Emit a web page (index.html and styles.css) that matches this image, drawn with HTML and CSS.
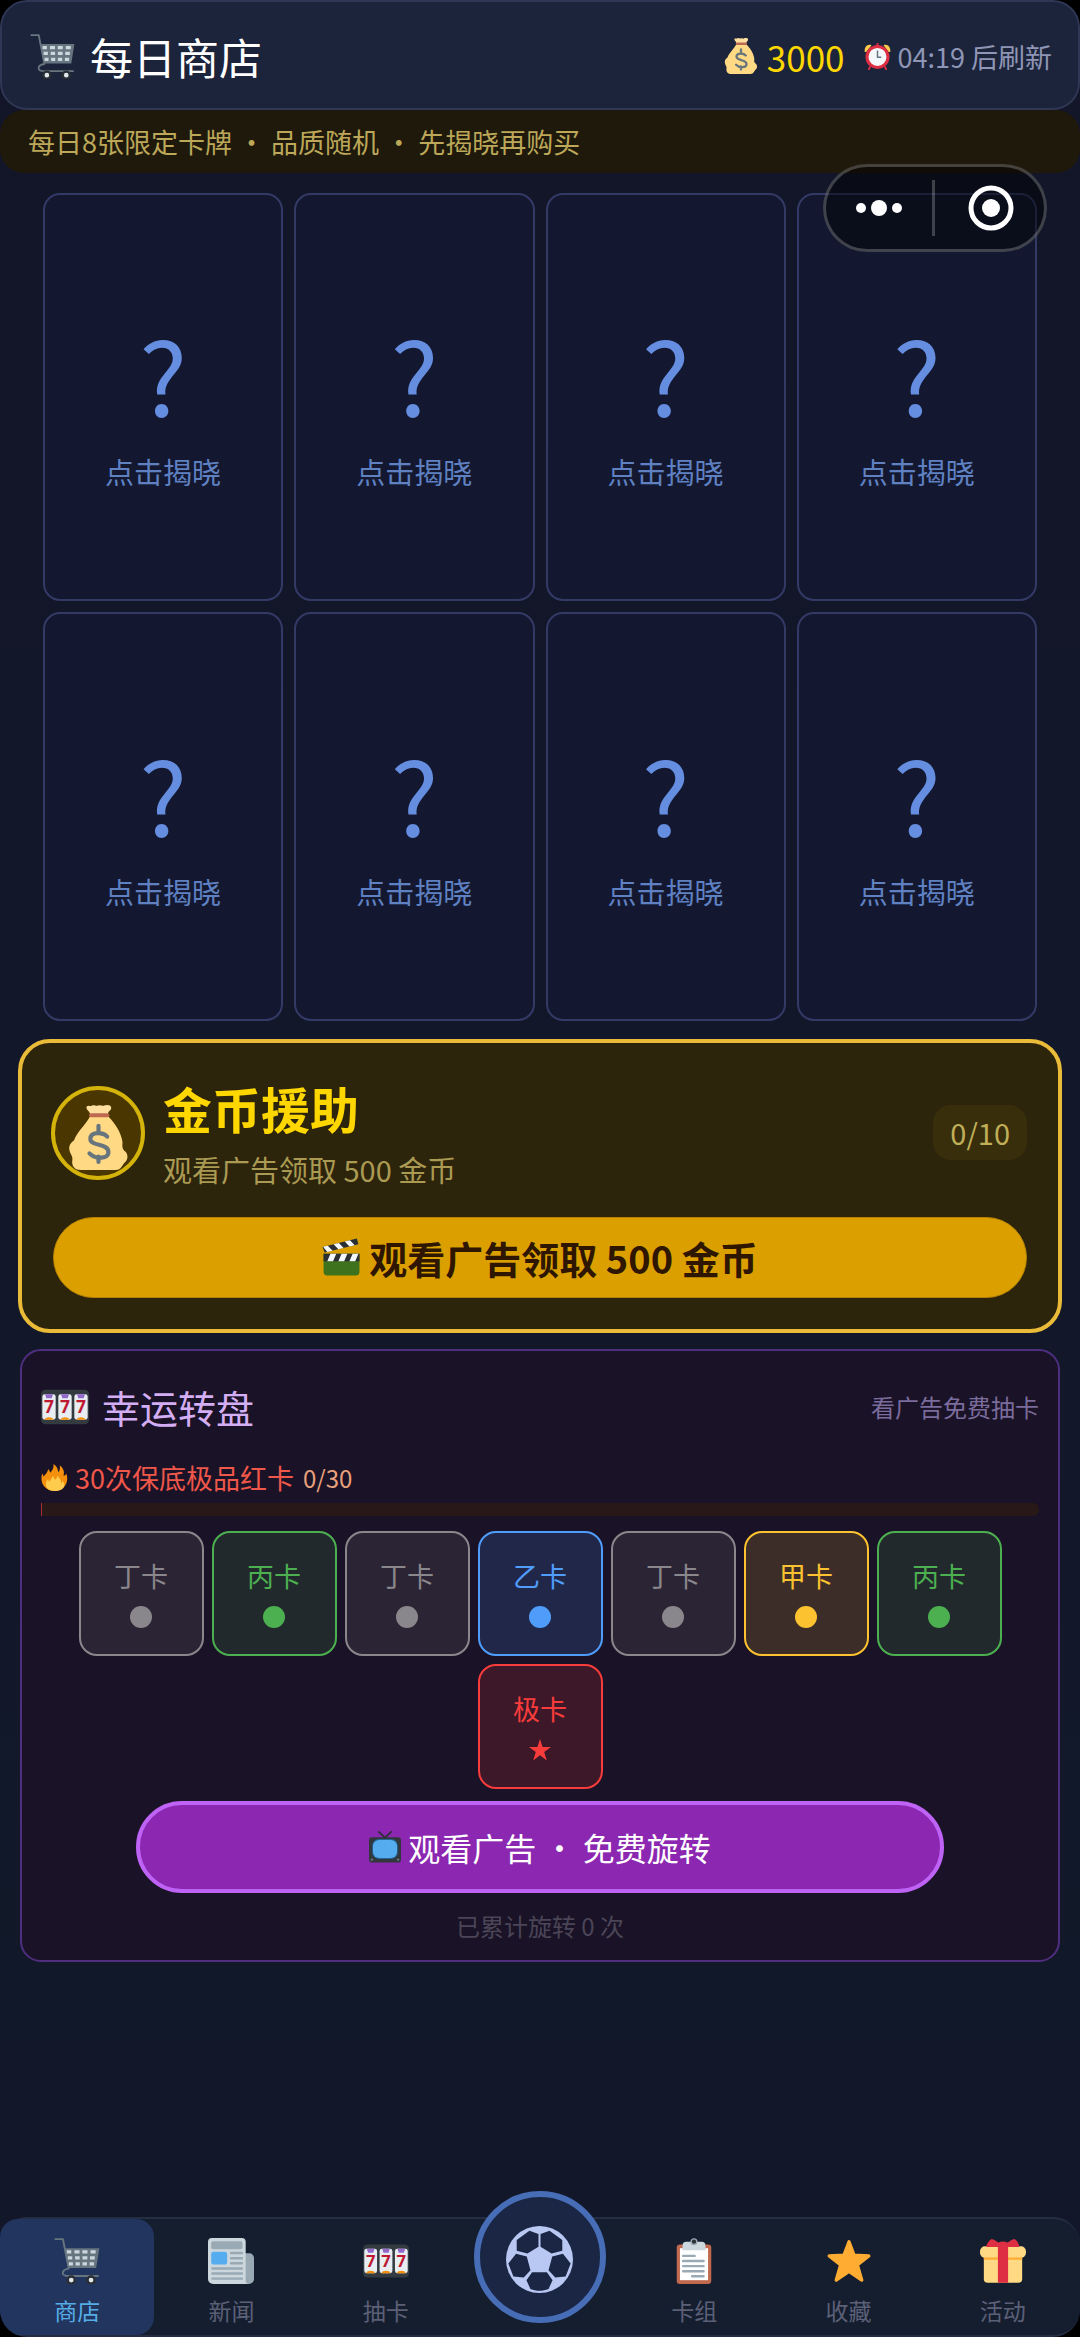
FILE: index.html
```html
<!DOCTYPE html>
<html lang="zh-CN">
<head>
  <meta charset="UTF-8">
  <meta name="viewport" content="width=device-width, initial-scale=1.0">
  <title>每日商店</title>
  <link rel="stylesheet" href="styles.css">
</head>
<body>

<!-- 图标 -->
<svg class="sprite" aria-hidden="true">
  <symbol id="i-cart" viewBox="0 0 36 36">
    <path d="M.5 .9H7L11.5 24C8 24.500 6.500 26 7 28C7.500 29.500 9 29.700 11 29.700H35" fill="none" stroke="#66757f" stroke-width="1.500" stroke-linejoin="round"/>
    <path d="M8.500 8H35.500L33 23.500H11.500Z" fill="#66757f"/>
    <path d="M10 10.900h3.500M16 10.900h4M22.200 10.900h4M28.600 10.900h4M10.800 15.500h3.500M16.500 15.500h3.600M22.300 15.500h3.800M28.200 15.500h3.700M11.600 20.200h3.200M16.900 20.200h3.300M22.300 20.200h3.500M27.900 20.200h3.400" stroke="#ccd6dd" stroke-width="2.600"/>
    <g fill="#e1e8ed" stroke="#292f33" stroke-width="1.900"><circle cx="13.500" cy="32.900" r="2.800"/><circle cx="29" cy="32.900" r="2.800"/></g>
  </symbol>
  <symbol id="i-bag" viewBox="0 0 36 36">
    <path d="M11.400 .8C12.500-.2 13.500 1 14.500 .3C15.700-.4 16.500 .9 17.800 .3C19 -.3 20 .9 21.200 .3C22.400-.2 25.500-.2 25 2C24.800 3.200 23.300 3.500 23.300 5H13.300C13 3 11 3 11.400 .8Z" fill="#ffdf9f"/>
    <path d="M13.200 6.500H23.600C27 10 30.500 15 31.300 20.500C31.200 22.500 31 24 32 25C34.500 26.500 34.800 30 32.500 31.800C31.200 33 30.700 36 27.500 36H8C4.500 36 3 33.500 3.500 30.500C3.900 28.500 2.500 27.500 2.100 25.800C1.300 23 2 21.300 4.500 19.500C6 15 10.500 11.500 13.200 6.500Z" fill="#ffd983"/>
    <rect x="12.800" y="4.500" width="11.200" height="2.300" rx="1" fill="#bf6952"/>
    <path d="M22.800 17.500C20.500 15 13.500 14.500 13.500 18.800C13.500 23 23.500 21 23.500 26C23.500 30.200 16 30 13 26.800M18 11.500V15.500M18 28.500V31.500" fill="none" stroke="#67757f" stroke-width="2.300" stroke-linecap="round"/>
  </symbol>
  <symbol id="i-clock" viewBox="0 0 36 36">
    <path d="M1 12C0 5 5 1 10 3L3 12ZM35 12C36 5 31 1 26 3L33 12Z" fill="#ffcc4d"/>
    <path d="M8 32L6.500 35M28 32L29.500 35M18 1V5" stroke="#dd2e44" stroke-width="2.500" stroke-linecap="round"/>
    <circle cx="18" cy="18.500" r="14" fill="#f5f8fa" stroke="#dd2e44" stroke-width="4"/>
    <path d="M18 10V19H23" fill="none" stroke="#66757f" stroke-width="2"/>
  </symbol>
  <symbol id="i-clap" viewBox="0 0 36 36">
    <path d="M1.500 15H35.500V32A3.500 3.500 0 0 1 32 35.500H5A3.500 3.500 0 0 1 1.500 32Z" fill="#3e721d"/>
    <path d="M1.500 15H35.500V22H1.500Z" fill="#292f33"/>
    <path d="M.5 8.500L33 .5L34.500 6L2.500 13.800Z" fill="#292f33"/>
    <path d="M5 22L8 15H13.500L10.500 22ZM15.500 22L18.500 15H24L21 22ZM26 22L29 15H34.500L31.500 22ZM1 8.400L5.500 7.300L10 12L5 13.200ZM11 6L16 4.700L20.500 9.500L15.500 10.700ZM21.500 3.400L26.500 2.200L31 6.900L26 8.100Z" fill="#f5f8fa"/>
  </symbol>
  <symbol id="i-slot" viewBox="0 0 36 36">
    <rect y="5" width="36" height="26" rx="3.500" fill="#343b40"/>
    <g fill="#e8edf1"><rect x="1" y="8.500" width="10" height="19" rx="1.800"/><rect x="13" y="8.500" width="10" height="19" rx="1.800"/><rect x="25" y="8.500" width="10" height="19" rx="1.800"/></g>
    <path d="M3 8.500H9L8 11.500H4ZM15 8.500H21L20 11.500H16ZM27 8.500H33L32 11.500H28Z" fill="#9268ca"/>
    <path d="M2.500 27.500C3 25 9 25 9.500 27.500ZM14.500 27.500C15 25 21 25 21.500 27.500ZM26.500 27.500C27 25 33 25 33.500 27.500Z" fill="#f4900c"/>
    <g class="seven"><text x="6" y="22.500">7</text><text x="18" y="22.500">7</text><text x="30" y="22.500">7</text></g>
  </symbol>
  <symbol id="i-fire" viewBox="0 0 36 36">
    <path d="M35 19C35 17 34.500 14.500 33.800 12.500C33 14.500 31.500 15.500 30 15.500C32 10 29 4.500 25 2C25.500 5 25.500 8.500 23 11C22.500 6 20.500 2 16.500 0C17.500 5 15 8.500 12.500 11.500C12 9.500 11 8 9.500 6.500C9.500 10.500 6 13 3.500 16.500C3 15 2.500 14 1.500 12.500C0 18 0 24 3.500 29C7 33.500 12 36 18 36C28 36 35 29 35 19Z" fill="#f4900c"/>
    <path d="M28.500 22C28.500 24 28 25 27 26C27 22 25 17.500 21.500 15.500C22 18 20 20 18.500 21C18 18.500 16.500 17 15 16C15.500 19 12.500 21 11 23.500C10 22.500 9.500 21.500 9.500 20C6 23.500 5.500 28 8 32C10.500 34.500 14 36 18 36C25 36 30 33.500 31 29C31.500 26.500 30.500 24 28.500 22Z" fill="#ffcc4d"/>
  </symbol>
  <symbol id="i-tv" viewBox="0 0 36 36">
    <path d="M11 1L18 7.500L25 1" fill="none" stroke="#292f33" stroke-width="1.800" stroke-linecap="round"/>
    <rect y="7" width="36" height="28.500" rx="3.500" fill="#31373d"/>
    <rect x="3.500" y="9" width="29" height="22.500" rx="8" fill="#226699"/>
    <rect x="4.500" y="10" width="27" height="20.500" rx="7" fill="#55acee"/>
    <circle cx="3.300" cy="32.200" r="1.400" fill="#66757f"/><circle cx="32.700" cy="32.200" r="1.400" fill="#66757f"/>
  </symbol>
  <symbol id="i-news" viewBox="0 0 36 36">
    <path d="M28 12H32.500A3.500 3.500 0 0 1 36 15.500V32A4 4 0 0 1 32 36H25Z" fill="#99aab5"/>
    <path d="M3 0H26.500A3 3 0 0 1 29.500 3V33Q29.500 36 32 36H4A4 4 0 0 1 0 32V3A3 3 0 0 1 3 0Z" fill="#ccd6dd"/>
    <rect x="2.500" y="2.500" width="24.500" height="6.300" rx="1.500" fill="#9aaab4"/>
    <rect x="2.500" y="10.800" width="12.500" height="10" rx="2" fill="#55acee"/>
    <path d="M18 11.800h8.500M18 15.800h8.500M18 19.800h8.500M3.500 23.800h23M3.500 27.800h23M3.500 31.800h23" stroke="#99aab5" stroke-width="1.900" stroke-linecap="round"/>
  </symbol>
  <symbol id="i-clip" viewBox="0 0 36 36">
    <rect x="4.500" y="5" width="27" height="31" rx="2.500" fill="#c1694f"/>
    <rect x="7" y="8" width="22" height="25" fill="#fff"/>
    <path d="M9 9.500V6A3 3 0 0 1 12 3H24A3 3 0 0 1 27 6V9.500Z" fill="#ccd6dd"/>
    <circle cx="18" cy="2.900" r="2.200" fill="#292f33" stroke="#99aab5" stroke-width="1.100"/>
    <path d="M9.500 14h9M9.500 18h16M9.500 22h16M9.500 26h16M16.500 30h9" stroke="#99aab5" stroke-width="1.900" stroke-linecap="round"/>
  </symbol>
  <symbol id="i-star" viewBox="0 0 36 36">
    <path d="M18 3L22 13.500L33.500 14L24.500 21L28 33L18 26.200L8 33L11.500 21L2.500 14L14 13.500Z" fill="#ffac33" stroke="#ffac33" stroke-width="2.600" stroke-linejoin="round"/>
  </symbol>
  <symbol id="i-gift" viewBox="0 0 36 36">
    <rect x="3" y="8" width="30" height="27" rx="3" fill="#ffd983"/>
    <rect y="6.500" width="36" height="9" rx="4" fill="#ffd983"/>
    <path d="M3 15.300H33V17H3Z" fill="#ffac33"/>
    <path d="M14 6.500H22V35H14Z" fill="#dd2e44"/>
    <path d="M18 7H5C5 5 7 2 9 .8C11 1 13 3 14.500 3.500C16.500 2.500 19.500 2.500 21.500 3.500C23 3 25 1 27 .8C29 2 31 5 30.500 7Z" fill="#dd2e44"/>
  </symbol>
  <symbol id="i-ball" viewBox="0 0 200 200">
    <circle cx="100" cy="100" r="100" fill="#b9c8f2"/>
    <path d="M70 14L97 24V62L64 82L32 74V42ZM130 14L103 24V62L136 82L168 74V42ZM30 83L62 91L73 132L53 154L22 151L7 112ZM170 83L138 91L127 132L147 154L178 151L193 112ZM78 138H122L139 162L127 188C110 195 90 195 73 188L61 162Z" fill="#1a2644"/>
  </symbol>
</svg>

<div class="app">
  <header class="header">
    <h1 class="title"><svg class="icon-lg"><use href="#i-cart"/></svg>每日商店</h1>
    <div class="coins"><svg class="icon-md"><use href="#i-bag"/></svg>3000</div>
    <div class="refresh"><svg class="icon-sm"><use href="#i-clock"/></svg>04:19 后刷新</div>
  </header>

  <p class="notice">每日8张限定卡牌 • 品质随机 • 先揭晓再购买</p>

  <div class="capsule">
    <button class="capsule-btn" aria-label="更多">
      <svg width="46" height="18" viewBox="0 0 46 18" fill="#fff"><circle cx="5" cy="9" r="5"/><circle cx="23" cy="9" r="8"/><circle cx="41" cy="9" r="5"/></svg>
    </button>
    <button class="capsule-btn" aria-label="关闭">
      <svg width="46" height="46" viewBox="0 0 46 46"><circle cx="23" cy="23" r="20" fill="none" stroke="#fff" stroke-width="5"/><circle cx="23" cy="23" r="9" fill="#fff"/></svg>
    </button>
  </div>

  <main class="main">
    <section class="cards">
      <button class="card"><span class="mark">?</span>点击揭晓</button>
      <button class="card"><span class="mark">?</span>点击揭晓</button>
      <button class="card"><span class="mark">?</span>点击揭晓</button>
      <button class="card"><span class="mark">?</span>点击揭晓</button>
      <button class="card"><span class="mark">?</span>点击揭晓</button>
      <button class="card"><span class="mark">?</span>点击揭晓</button>
      <button class="card"><span class="mark">?</span>点击揭晓</button>
      <button class="card"><span class="mark">?</span>点击揭晓</button>
    </section>

    <section class="aid">
      <div class="aid-top">
        <div class="aid-icon"><svg><use href="#i-bag"/></svg></div>
        <div class="aid-text">
          <h2>金币援助</h2>
          <p>观看广告领取 500 金币</p>
        </div>
        <span class="aid-count">0/10</span>
      </div>
      <button class="aid-btn"><svg class="icon-clap"><use href="#i-clap"/></svg>观看广告领取 500 金币</button>
    </section>

    <section class="wheel">
      <div class="wheel-top">
        <h2><svg class="icon-slot"><use href="#i-slot"/></svg>幸运转盘</h2>
        <span class="wheel-tip">看广告免费抽卡</span>
      </div>
      <div class="pity"><svg class="icon-sm"><use href="#i-fire"/></svg>30次保底极品红卡<span class="pity-count">0/30</span></div>
      <div class="bar"><div class="bar-fill"></div></div>
      <div class="tiles">
        <div class="tile gray">丁卡<span class="dot"></span></div>
        <div class="tile green">丙卡<span class="dot"></span></div>
        <div class="tile gray">丁卡<span class="dot"></span></div>
        <div class="tile blue">乙卡<span class="dot"></span></div>
        <div class="tile gray">丁卡<span class="dot"></span></div>
        <div class="tile gold">甲卡<span class="dot"></span></div>
        <div class="tile green">丙卡<span class="dot"></span></div>
        <div class="tile red">极卡<svg class="tile-star" viewBox="0 0 22 22"><path d="M11 0L13.600 8H22L15.200 13L17.800 21.500L11 16.300L4.200 21.500L6.800 13L0 8H8.400Z" fill="currentColor"/></svg></div>
      </div>
      <button class="spin-btn"><svg class="icon-tv"><use href="#i-tv"/></svg>观看广告 • 免费旋转</button>
      <p class="spin-count">已累计旋转 0 次</p>
    </section>
  </main>

  <nav class="nav">
    <a href="#" class="nav-item active"><svg><use href="#i-cart"/></svg>商店</a>
    <a href="#" class="nav-item"><svg><use href="#i-news"/></svg>新闻</a>
    <a href="#" class="nav-item"><svg><use href="#i-slot"/></svg>抽卡</a>
    <a href="#" class="nav-item" aria-label="比赛"><span class="nav-ball"><svg><use href="#i-ball"/></svg></span></a>
    <a href="#" class="nav-item"><svg><use href="#i-clip"/></svg>卡组</a>
    <a href="#" class="nav-item"><svg><use href="#i-star"/></svg>收藏</a>
    <a href="#" class="nav-item"><svg><use href="#i-gift"/></svg>活动</a>
  </nav>
</div>

</body>
</html>
```
FILE: styles.css
```css
* {
  box-sizing: border-box;
  margin: 0;
  padding: 0;
}
body {
  background: #000;
  font-family: "Noto Sans CJK SC", sans-serif;
  color: #fff;
}
button {
  font-family: inherit;
  cursor: pointer;
}
h1, h2 {
  font-weight: normal;
}
svg {
  flex-shrink: 0;
}
.sprite {
  display: none;
}
.seven {
  font: bold 13px "Open Sans", sans-serif;
  fill: #be1931;
  text-anchor: middle;
}
.app {
  position: relative;
  display: flex;
  flex-direction: column;
  min-height: 100vh;
  background: linear-gradient(#121628, #12172a 60%, #111929 82%, #12162a);
  border-radius: 27px;
  overflow: hidden;
}

.icon-lg { width: 45px; height: 45px; }
.icon-md { width: 36px; height: 36px; }
.icon-sm { width: 27px; height: 27px; }
.icon-clap { width: 38px; height: 38px; }
.icon-slot { width: 48px; height: 48px; }
.icon-tv { width: 32px; height: 32px; }

/* 顶部 */
.header {
  display: flex;
  align-items: center;
  height: 110px;
  padding: 2px 26px 0 28px;
  background: #1c243b;
  border: 2px solid #2f3754;
  border-radius: 27px;
}
.title {
  display: flex;
  align-items: center;
  gap: 15px;
  margin-right: auto;
  font-size: 43px;
}
.coins {
  display: flex;
  align-items: center;
  gap: 8px;
  margin-right: 19px;
  font-size: 35px;
  color: #ffd700;
}
.refresh {
  display: flex;
  align-items: center;
  gap: 7px;
  font-size: 27px;
  color: #8f96b5;
}
.notice {
  height: 63px;
  padding: 0 28px;
  line-height: 63px;
  font-size: 27px;
  color: #bca858;
  background: #1f190c;
  border-radius: 24px;
}

/* 右上角胶囊 */
.capsule {
  position: absolute;
  top: 164px;
  right: 33px;
  display: flex;
  align-items: center;
  width: 224px;
  height: 88px;
  border: 3px solid rgba(255, 255, 255, 0.22);
  border-radius: 44px;
  background: rgba(0, 0, 0, 0.45);
}
.capsule-btn {
  display: flex;
  flex: 1;
  align-items: center;
  justify-content: center;
  height: 56px;
  border: none;
  background: none;
}
.capsule-btn + .capsule-btn {
  padding-left: 4px;
  border-left: 3px solid rgba(255, 255, 255, 0.22);
}

/* 卡牌 */
.cards {
  display: grid;
  grid-template-columns: repeat(4, 1fr);
  gap: 11px;
  padding: 20px 43px 18px;
}
.card {
  display: flex;
  flex-direction: column;
  align-items: center;
  justify-content: center;
  aspect-ratio: 10 / 17;
  padding-top: 10px;
  border: 2px solid #343a66;
  border-radius: 17px;
  background: #131830;
  font-size: 29px;
  line-height: 40px;
  color: #5f81c2;
}
.mark {
  margin-bottom: 18px;
  font-size: 101px;
  line-height: 120px;
  color: #658de0;
}

/* 金币援助 */
.aid {
  margin: 0 18px 16px;
  padding: 33px 31px 31px;
  background: #2d240c;
  border: 4px solid #eabb38;
  border-radius: 32px;
}
.aid-top {
  display: flex;
  align-items: center;
  margin-bottom: 27px;
}
.aid-icon {
  display: flex;
  align-items: flex-end;
  justify-content: center;
  width: 94px;
  height: 94px;
  margin: 0 18px 0 -2px;
  padding-bottom: 6px;
  background: #4a3600;
  border: 4px solid #d4b40a;
  border-radius: 50%;
}
.aid-icon svg {
  width: 65px;
  height: 65px;
}
.aid-text {
  flex: 1;
}
.aid-text h2 {
  font-size: 49px;
  font-weight: bold;
  line-height: 64px;
  color: #ffd700;
}
.aid-text p {
  font-size: 29px;
  line-height: 42px;
  margin-top: 8px;
  color: #aa9a52;
}
.aid-count {
  padding: 0 17px;
  line-height: 55px;
  font-size: 29px;
  color: #c0ae58;
  background: #382e0c;
  border-radius: 18px;
}
.aid-btn {
  display: flex;
  align-items: center;
  justify-content: center;
  gap: 9px;
  width: 100%;
  height: 81px;
  border: 1px solid #b58200;
  border-radius: 41px;
  background: #dba000;
  font-size: 38px;
  font-weight: bold;
  color: #2f1600;
}

/* 幸运转盘 */
.wheel {
  margin: 0 20px;
  padding: 26px 19px 16px;
  background: #1a1226;
  border: 2px solid #4f2e80;
  border-radius: 21px;
}
.wheel-top {
  display: flex;
  align-items: center;
  justify-content: space-between;
  height: 60px;
}
.wheel-top h2 {
  display: flex;
  align-items: center;
  gap: 13px;
  font-size: 38px;
  color: #d4aef4;
}
.wheel-tip {
  font-size: 24px;
  color: #7a6c9c;
}
.pity {
  display: flex;
  align-items: center;
  gap: 7px;
  height: 40px;
  margin-top: 21px;
  font-size: 27px;
  color: #ee574a;
}
.pity-count {
  margin-left: 2px;
  font-size: 24px;
  color: #e8a07c;
}
.bar {
  height: 13px;
  margin-top: 5px;
  background: #281818;
  border-radius: 0 6px 6px 0;
}
.bar-fill {
  width: 1px;
  height: 100%;
  background: #a82c34;
}
.tiles {
  display: flex;
  flex-wrap: wrap;
  justify-content: center;
  gap: 8px;
  padding: 15px 30px 12px;
}
.tile {
  display: flex;
  flex-direction: column;
  align-items: center;
  gap: 9px;
  width: 125px;
  height: 125px;
  padding-top: 22px;
  border: 2px solid;
  border-radius: 18px;
  font-size: 27px;
  line-height: 42px;
}
.dot {
  width: 22px;
  height: 22px;
  border-radius: 50%;
  background: currentColor;
}
.tile-star {
  width: 22px;
  height: 22px;
}
.gray { color: #8a878c; background: #2a2435; }
.green { color: #4caf50; background: #22292c; }
.blue { color: #4f9cfb; background: #212749; }
.gold { color: #fcc22f; background: #3c2d29; }
.red { color: #f83c3c; background: #3c1828; }

.spin-btn {
  display: flex;
  align-items: center;
  justify-content: center;
  gap: 7px;
  width: 81%;
  height: 92px;
  margin: 0 auto;
  border: 4px solid #bf62f6;
  border-radius: 46px;
  background: #8b27b0;
  font-size: 32px;
  color: #fff;
}
.spin-count {
  margin-top: 15px;
  line-height: 36px;
  font-size: 24px;
  text-align: center;
  color: #4a4557;
}

/* 底部导航 */
.nav {
  display: flex;
  height: 120px;
  margin-top: auto;
  background: #151e2f;
  border-top: 2px solid #252d42;
  border-bottom: 2px solid #252d42;
  border-radius: 27px;
}
.nav-item {
  display: flex;
  flex: 1;
  flex-direction: column;
  align-items: center;
  padding-top: 19px;
  border-radius: 18px;
  font-size: 23px;
  line-height: 34px;
  color: #5c6077;
  text-decoration: none;
}
.nav-item svg {
  width: 46px;
  height: 46px;
  margin-bottom: 9px;
}
.nav-item.active {
  background: #22355e;
  color: #55ace6;
}
.nav-ball {
  display: flex;
  align-items: center;
  justify-content: center;
  width: 132px;
  height: 132px;
  margin-top: -47px;
  flex-shrink: 0;
  background: #1a2644;
  border: 6px solid #466db5;
  border-radius: 50%;
}
.nav-item .nav-ball svg {
  width: 67px;
  height: 67px;
  margin: 4px 0 0;
}
```
